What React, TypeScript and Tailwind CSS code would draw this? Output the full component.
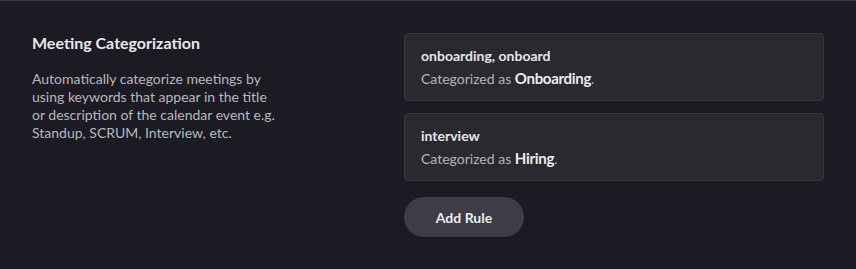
export default function App() {
  const rules = [
    { keywords: "onboarding, onboard", category: "Onboarding" },
    { keywords: "interview", category: "Hiring" },
  ];
  return (
    <div
      className="w-[856px] h-[269px] bg-[#1c1b23] border-t border-[#3a3941] flex justify-between px-8 pt-8"
      style={{ fontFamily: "Lato, 'Noto Sans', sans-serif" }}
    >
      <div className="w-[250px]">
        <h2 className="text-[16px] font-bold text-[#e9e8ec] leading-[22px] -mt-[1px]">Meeting Categorization</h2>
        <p className="mt-[16px] text-[14px] leading-[18px] text-[#b8b7bd]">
          Automatically categorize meetings by using keywords that appear in the title or description of the calendar event e.g. Standup, SCRUM, Interview, etc.
        </p>
      </div>
      <div className="w-[420px] flex flex-col">
        <div className="flex flex-col gap-3">
          {rules.map((r) => (
            <div
              key={r.keywords}
              className="h-[68px] rounded bg-[#2a2930] border border-[#38373e] px-4 pt-[11px]"
            >
              <div className="text-[14px] font-bold leading-[22px] text-[#e6e5ea]">{r.keywords}</div>
              <div className="text-[14px] leading-[22px] text-[#b5b4ba]">
                Categorized as <span className="font-bold text-[#ecebef] text-[15px] tracking-[-0.3px]">{r.category}</span>.
              </div>
            </div>
          ))}
        </div>
        <button className="mt-4 w-[120px] h-[40px] rounded-full bg-[#3e3d47] text-[14px] font-bold text-[#ecebef]">
          Add Rule
        </button>
      </div>
    </div>
  );
}
